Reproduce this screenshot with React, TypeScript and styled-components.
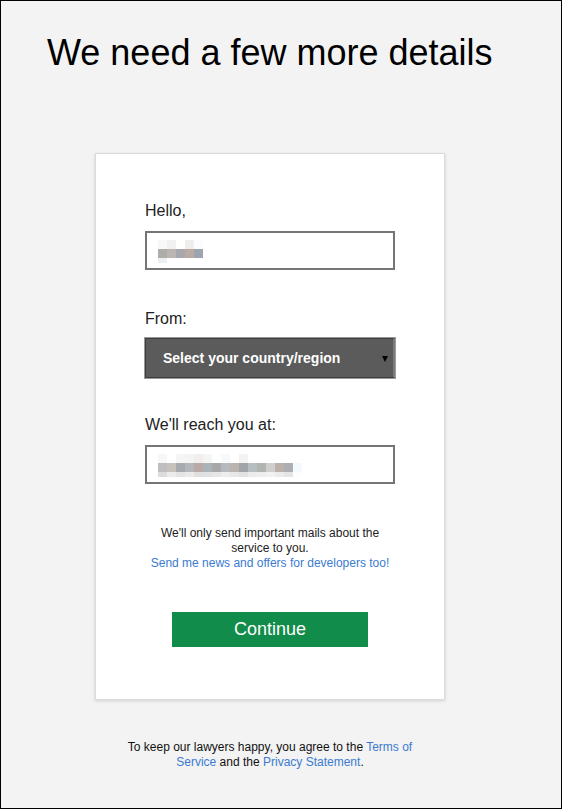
import React, { FC } from "react";
import styled, { createGlobalStyle } from "styled-components";

const GlobalStyle = createGlobalStyle`
  html, body {
    margin: 0;
    padding: 0;
  }
  body {
    font-family: "Liberation Sans", Arial, sans-serif;
    color: #000;
  }
`;

const helloPixels = [
  ["#f8f8f8", "#f1f1f1", "#ffffff", "#f0eeec", "#fbfcfd"],
  ["#acaea7", "#bcb5b3", "#a6a8ae", "#b9aba3", "#9ea3b1"],
  ["#eceef0", null, null, null, null],
];

const emailPixels = [
  ["#f7f7f7", "#ffffff", "#f5f5f5", "#f3f3f3", "#f1efee", "#f5f5f5", "#ffffff", "#f7f9fa", "#ffffff", "#f3f3f3", "#ffffff", "#ffffff", "#ffffff", "#ffffff", "#ffffff", "#ffffff"],
  ["#bebebe", "#c8c2bd", "#a9aab0", "#b4b8bb", "#b9a9a7", "#aab3b7", "#a6a8a9", "#b5babe", "#bbb3ad", "#a3a4a9", "#b6bec0", "#b1b5b1", "#cfcfcf", "#bcb0aa", "#acaeb3", "#f3f9fd"],
  ["#dcdcdc", "#ececec", "#e4e4e4", "#eaeaea", "#e2dede", "#dfe2e4", "#e6e6e6", "#ededed", "#e8e8e8", "#e2e2e2", "#ececec", "#eeeeee", "#f1f1f1", "#ebebeb", "#e5e5e5", "#fbfdff"],
];

export const App: FC = () => {
  return (
    <Page>
      <GlobalStyle />
      <Heading>We need a few more details</Heading>

      <Column>
        <Card>
          <Field>
            <Label>Hello,</Label>
            <TextBox>
              <Mosaic pixels={helloPixels} />
            </TextBox>
          </Field>

          <Field tight>
            <Label>From:</Label>
            <Select>
              <span>Select your country/region</span>
              <Arrow />
            </Select>
          </Field>

          <Field>
            <Label>We'll reach you at:</Label>
            <TextBox>
              <Mosaic pixels={emailPixels} />
            </TextBox>
          </Field>

          <Notice>
            We'll only send important mails about the service to you.
            <br />
            <Link href="#">Send me news and offers for developers too!</Link>
          </Notice>

          <ContinueButton>Continue</ContinueButton>
        </Card>

        <Footer>
          To keep our lawyers happy, you agree to the{" "}
          <Link href="#">Terms of Service</Link> and the{" "}
          <Link href="#">Privacy Statement</Link>.
        </Footer>
      </Column>
    </Page>
  );
};

export default App;

// redacted text in the inputs, drawn as a pixel grid
const Mosaic: FC<{ pixels: (string | null)[][] }> = ({ pixels }) => (
  <MosaicGrid>
    {pixels.map((row, r) => (
      <MosaicRow key={r}>
        {row.map((c, i) => (
          <Pixel key={i} color={c} />
        ))}
      </MosaicRow>
    ))}
  </MosaicGrid>
);

const Page = styled.div`
  box-sizing: border-box;
  height: 809px;
  border: 1px solid #000;
  background-color: #f3f3f3;
  overflow: hidden;
`;

const Heading = styled.h1`
  margin: 31px 0 0 46px;
  font-size: 36px;
  font-weight: normal;
  line-height: 41px;
`;

const Column = styled.div`
  width: 350px;
  margin: 80px 0 0 94px;
`;

const Card = styled.div`
  box-sizing: border-box;
  height: 547px;
  background-color: #fff;
  border: 1px solid #dcdcdc;
  box-shadow: 0 1px 3px rgba(0, 0, 0, 0.15);
  padding: 48px 49px 0;
  display: flex;
  flex-direction: column;
`;

const Field = styled.div<{ tight?: boolean }>`
  display: flex;
  flex-direction: column;
  gap: 11px;
  margin-bottom: ${(p) => (p.tight ? "38px" : "40px")};
`;

const Label = styled.div`
  font-size: 16px;
  line-height: 18px;
  color: #222;
`;

const TextBox = styled.div`
  box-sizing: border-box;
  height: 39px;
  border: 2px solid #757575;
  background: #fff;
  display: flex;
  align-items: center;
  padding-left: 11px;
`;

const MosaicGrid = styled.div`
  display: flex;
  flex-direction: column;
  margin-top: 2px;
`;

const MosaicRow = styled.div`
  display: flex;
  &:last-child > div {
    height: 5px;
  }
`;

const Pixel = styled.div<{ color: string | null }>`
  width: 9px;
  height: 9px;
  background: ${(p) => p.color || "transparent"};
`;

const Select = styled.div`
  box-sizing: border-box;
  height: 40px;
  margin-top: -1px;
  background-color: #5b5b5b;
  border: 1px solid #3d3d3d;
  border-right: 2px solid #7a7a7a;
  box-shadow: 0 0 0 1px #9a9a9a;
  color: #fff;
  font-size: 14px;
  font-weight: bold;
  display: flex;
  align-items: center;
  justify-content: space-between;
  padding: 0 5px 0 17px;
`;

const Arrow = styled.span`
  width: 0;
  height: 0;
  border-left: 3px solid transparent;
  border-right: 3px solid transparent;
  border-top: 6px solid #000;
  margin-top: 1px;
`;

const Notice = styled.div`
  margin-top: 2px;
  font-size: 12px;
  line-height: 15px;
  text-align: center;
  color: #222;
`;

const Link = styled.a`
  color: #3a7bd0;
  text-decoration: none;
`;

const ContinueButton = styled.button`
  align-self: center;
  width: 196px;
  height: 35px;
  margin-top: 41px;
  border: none;
  background-color: #118c4a;
  color: #fff;
  font-family: "Liberation Sans", Arial, sans-serif;
  font-size: 18px;
  cursor: pointer;
`;

const Footer = styled.div`
  width: 300px;
  margin: 40px auto 0;
  font-size: 12px;
  line-height: 15px;
  text-align: center;
  color: #111;
`;
